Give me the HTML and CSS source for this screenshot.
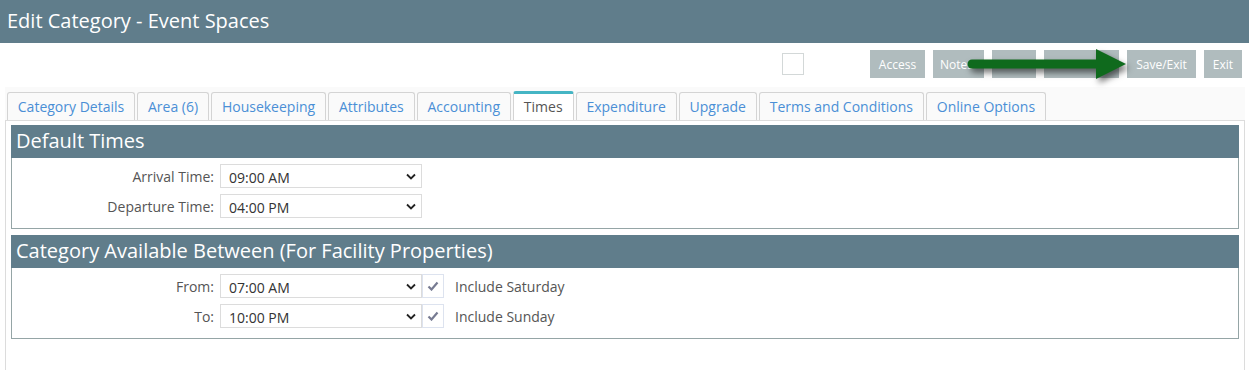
FILE: index.html
```html
<!DOCTYPE html>
<html lang="en">
<head>
	<meta charset="UTF-8">
	<title>Edit Category - Event Spaces</title>
	<link rel="stylesheet" href="styles.css">
</head>
<body>
	<div class="topbar">Edit Category - Event Spaces</div>

	<div class="toolbar">
		<span class="toolbar-check"></span>
		<button class="tool-btn btn-access">Access</button>
		<button class="tool-btn btn-notes">Notes</button>
		<button class="tool-btn btn-blank1"></button>
		<button class="tool-btn btn-blank2"></button>
		<button class="tool-btn btn-save">Save/Exit</button>
		<button class="tool-btn btn-exit">Exit</button>

		<svg class="arrow" width="180" height="44" viewBox="0 0 180 44">
			<line x1="6" y1="17" x2="134" y2="17" stroke="#0f6a1d" stroke-width="9" stroke-linecap="round"/>
			<polygon points="130,2 160,17 130,32" fill="#0f6a1d"/>
		</svg>
	</div>

	<div class="content">
		<ul class="tabs">
			<li class="tab">Category Details</li>
			<li class="tab">Area (6)</li>
			<li class="tab">Housekeeping</li>
			<li class="tab">Attributes</li>
			<li class="tab">Accounting</li>
			<li class="tab active">Times</li>
			<li class="tab">Expenditure</li>
			<li class="tab">Upgrade</li>
			<li class="tab">Terms and Conditions</li>
			<li class="tab">Online Options</li>
		</ul>

		<div class="tab-body">
			<div class="panel">
				<div class="panel-head">Default Times</div>
				<div class="panel-body">
					<div class="row">
						<label class="row-label">Arrival Time:</label>
						<div class="select">09:00 AM
							<svg class="chev" width="10" height="7" viewBox="0 0 10 7"><path d="M1 1.5 L5 5.5 L9 1.5" fill="none" stroke="#222" stroke-width="1.8"/></svg>
						</div>
					</div>
					<div class="row">
						<label class="row-label">Departure Time:</label>
						<div class="select">04:00 PM
							<svg class="chev" width="10" height="7" viewBox="0 0 10 7"><path d="M1 1.5 L5 5.5 L9 1.5" fill="none" stroke="#222" stroke-width="1.8"/></svg>
						</div>
					</div>
				</div>
			</div>

			<div class="panel">
				<div class="panel-head">Category Available Between (For Facility Properties)</div>
				<div class="panel-body">
					<div class="row">
						<label class="row-label">From:</label>
						<div class="select">07:00 AM
							<svg class="chev" width="10" height="7" viewBox="0 0 10 7"><path d="M1 1.5 L5 5.5 L9 1.5" fill="none" stroke="#222" stroke-width="1.8"/></svg>
						</div>
						<span class="tick">
							<svg width="12" height="10" viewBox="0 0 12 10"><path d="M1.5 5.5 L4.5 8.5 L10.5 1.5" fill="none" stroke="#777b92" stroke-width="2.2"/></svg>
						</span>
						<span class="tick-text">Include Saturday</span>
					</div>
					<div class="row">
						<label class="row-label">To:</label>
						<div class="select">10:00 PM
							<svg class="chev" width="10" height="7" viewBox="0 0 10 7"><path d="M1 1.5 L5 5.5 L9 1.5" fill="none" stroke="#222" stroke-width="1.8"/></svg>
						</div>
						<span class="tick">
							<svg width="12" height="10" viewBox="0 0 12 10"><path d="M1.5 5.5 L4.5 8.5 L10.5 1.5" fill="none" stroke="#777b92" stroke-width="2.2"/></svg>
						</span>
						<span class="tick-text">Include Sunday</span>
					</div>
				</div>
			</div>
		</div>
	</div>
</body>
</html>
```
FILE: styles.css
```css
body {
	margin: 0;
	font-family: 'Open Sans', 'Noto Sans', sans-serif;
	background-color: white;
	color: #555;
}

.topbar {
	height: 43px;
	line-height: 41px;
	padding-left: 7px;
	background-color: #607d8b;
	color: white;
	font-size: 20px;
}

.toolbar {
	position: relative;
	display: flex;
	justify-content: flex-end;
	align-items: center;
	gap: 8px;
	height: 28px;
	padding: 7px 7px 9px 0;
}

.toolbar-check {
	width: 20px;
	height: 20px;
	border: 1px solid #d3d8d8;
	margin-right: 58px;
}

.tool-btn {
	height: 28px;
	padding: 0;
	border: none;
	background-color: #b0bcbe;
	color: white;
	font-family: 'Open Sans', sans-serif;
	font-size: 12px;
	text-align: center;
}

.btn-access { width: 55px; }
.btn-notes { width: 51px; text-align: left; padding-left: 7px; }
.btn-blank1 { width: 44px; }
.btn-blank2 { width: 75px; }
.btn-save { width: 69px; }
.btn-exit { width: 38px; }

/* arrow pointing at save/exit */
.arrow {
	position: absolute;
	left: 966px;
	top: 4px;
	filter: drop-shadow(3px 4px 3px rgba(0, 0, 0, 0.55));
}

.content {
	margin: 0 4px 0 5px;
	background-color: #fafafa;
}

.tabs {
	display: flex;
	list-style: none;
	margin: 0;
	padding: 5px 0 0 2px;
}

.tab {
	height: 27px;
	line-height: 27px;
	padding: 0 10px 0 9.8px;
	margin-right: 2px;
	border: 1px solid #d4d4d4;
	border-bottom: none;
	border-radius: 3px 3px 0 0;
	background-color: #fafafa;
	color: #4a8fd6;
	font-size: 14px;
	position: relative;
}

.tab.active {
	background-color: white;
	color: #555;
	border-top: 3px solid #45b5c4;
	height: 26px;
	line-height: 25px;
	margin-top: -1px;
	margin-bottom: -1px;
	z-index: 1;
}

.tab-body {
	background-color: white;
	border: 1px solid #dcdcdc;
	padding: 4px 5px 40px 5px;
}

.panel {
	margin-bottom: 6px;
}

.panel-head {
	height: 33px;
	line-height: 32px;
	padding-left: 5px;
	background-color: #607d8b;
	color: white;
	font-size: 20px;
}

.panel-body {
	border: 1px solid #95a5a6;
	border-top: none;
	padding: 6px 0 10px 0;
	display: flex;
	flex-direction: column;
	gap: 6px;
}

.row {
	display: flex;
	align-items: center;
	height: 24px;
}

.row-label {
	width: 202px;
	margin-right: 6px;
	text-align: right;
	font-size: 14px;
	color: #555;
}

.select {
	position: relative;
	width: 192px;
	height: 22px;
	line-height: 25px;
	padding-left: 8px;
	border: 1px solid #dcdcdc;
	font-size: 14px;
	color: #333;
}

.chev {
	position: absolute;
	right: 5px;
	top: 8px;
}

.tick {
	width: 20px;
	height: 22px;
	border: 1px solid #dde3ef;
	display: flex;
	align-items: center;
	justify-content: center;
}

.tick-text {
	margin-left: 11px;
	font-size: 14px;
	color: #555;
}
```
